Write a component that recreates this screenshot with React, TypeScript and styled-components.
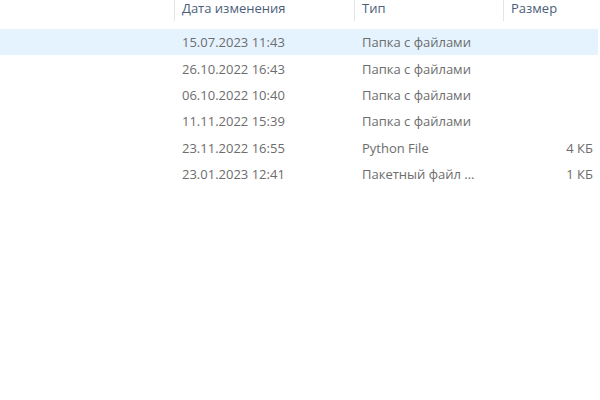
import { ReactElement } from 'react';
import styled, { createGlobalStyle } from 'styled-components';

const GlobalStyle = createGlobalStyle`
  html, body {
    margin: 0;
    padding: 0;
    background: #ffffff;
  }
  body {
    font-family: "Open Sans", "Noto Sans", sans-serif;
    width: 600px;
    height: 400px;
    overflow: hidden;
  }
`;

const COLS = '174px 180px 149px 1fr';

const StyledList = styled.div`
  display: flex;
  flex-direction: column;
  width: 600px;
`;

const StyledHeader = styled.div`
  display: grid;
  grid-template-columns: ${COLS};
  height: 21px;
  margin-bottom: 8px;
`;

const StyledHeaderCell = styled.div<{ $sep?: boolean }>`
  border-left: ${(p) => (p.$sep ? '1px solid #e5e5e5' : 'none')};
  padding-left: 7px;
  padding-top: 1px;
  font-size: 13px;
  line-height: 14px;
  color: #4c607a;
  white-space: nowrap;
`;

const StyledRow = styled.div<{ $selected?: boolean }>`
  display: grid;
  grid-template-columns: ${COLS};
  height: 26.4px;
  align-items: center;
  background: ${(p) => (p.$selected ? '#e5f3ff' : 'transparent')};
  margin-right: 2px;
`;

const StyledCell = styled.div<{ $right?: boolean }>`
  padding-left: 8px;
  padding-right: ${(p) => (p.$right ? '5px' : '0')};
  text-align: ${(p) => (p.$right ? 'right' : 'left')};
  font-size: 13px;
  color: #6d6d6d;
  white-space: nowrap;
  overflow: hidden;
`;

type FileRow = {
  date: string;
  type: string;
  size: string;
};

const rows: FileRow[] = [
  { date: '15.07.2023 11:43', type: 'Папка с файлами', size: '' },
  { date: '26.10.2022 16:43', type: 'Папка с файлами', size: '' },
  { date: '06.10.2022 10:40', type: 'Папка с файлами', size: '' },
  { date: '11.11.2022 15:39', type: 'Папка с файлами', size: '' },
  { date: '23.11.2022 16:55', type: 'Python File', size: '4 КБ' },
  { date: '23.01.2023 12:41', type: 'Пакетный файл ...', size: '1 КБ' }
];

export default function App(): ReactElement {
  return (
    <>
      <GlobalStyle />
      <StyledList>
        <StyledHeader>
          <StyledHeaderCell></StyledHeaderCell>
          <StyledHeaderCell $sep>Дата изменения</StyledHeaderCell>
          <StyledHeaderCell $sep>Тип</StyledHeaderCell>
          <StyledHeaderCell $sep>Размер</StyledHeaderCell>
        </StyledHeader>
        {rows.map((row, i) => (
          <StyledRow key={i} $selected={i === 0}>
            <StyledCell></StyledCell>
            <StyledCell>{row.date}</StyledCell>
            <StyledCell>{row.type}</StyledCell>
            <StyledCell $right>{row.size}</StyledCell>
          </StyledRow>
        ))}
      </StyledList>
    </>
  );
}
